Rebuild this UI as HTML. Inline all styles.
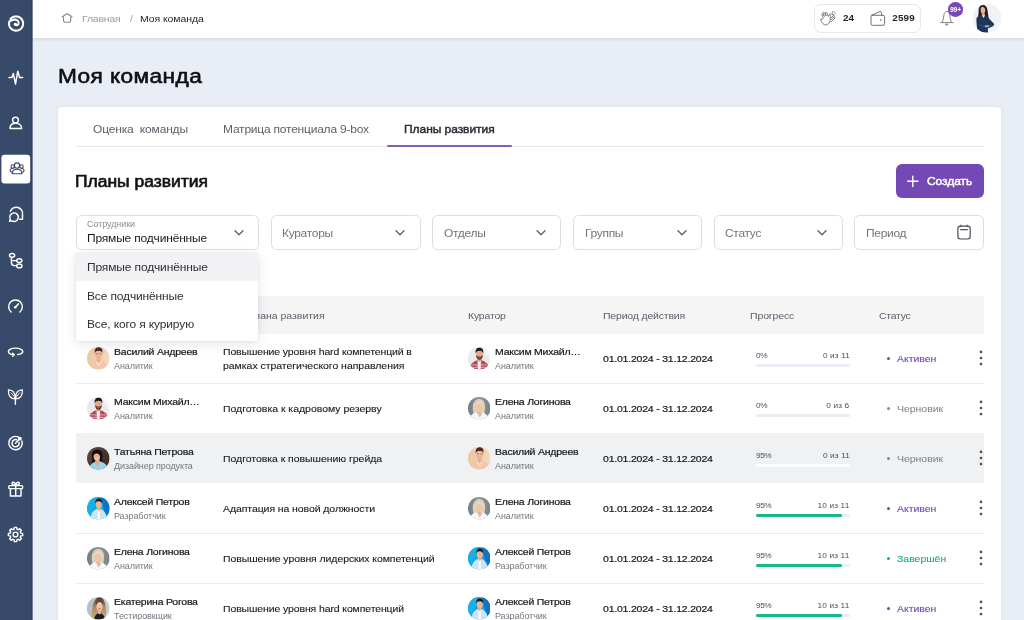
<!DOCTYPE html>
<html lang="ru"><head><meta charset="utf-8"><title>Моя команда</title>
<style>
*{box-sizing:border-box;margin:0;padding:0}
html,body{width:1024px;height:620px;overflow:hidden}
body{font-family:"Liberation Sans",sans-serif;background:#e9eef6;position:relative}
.abs{position:absolute}
.t{position:absolute;white-space:nowrap;line-height:1}
.b{font-weight:700}
.m1{-webkit-text-stroke:0.1px currentColor}
.m2{-webkit-text-stroke:0.2px currentColor}
.m3{-webkit-text-stroke:0.3px currentColor}
.m4{-webkit-text-stroke:0.45px currentColor}
.m5{-webkit-text-stroke:0.6px currentColor}
#root{position:absolute;left:0;top:0;width:1024px;height:620px;will-change:transform}
</style></head><body>
<svg width="0" height="0" style="position:absolute">
<defs>
<clipPath id="cc"><circle cx="12" cy="12" r="12"/></clipPath>
<linearGradient id="g1" x1="0" x2="1"><stop offset="0" stop-color="#e8c7a2"/><stop offset="1" stop-color="#f7d6bd"/></linearGradient>
<linearGradient id="g3" x1="0" y1="0" x2="1" y2="1"><stop offset="0" stop-color="#6a5340"/><stop offset=".5" stop-color="#47352c"/><stop offset="1" stop-color="#3d2d27"/></linearGradient>
<linearGradient id="g5" x1="0" x2="1"><stop offset="0" stop-color="#737b82"/><stop offset=".5" stop-color="#8f969b"/><stop offset="1" stop-color="#7b8389"/></linearGradient>
<linearGradient id="g6h" x1="0" y1="0" x2="0" y2="1"><stop offset="0" stop-color="#4e392c"/><stop offset=".45" stop-color="#a98a62"/><stop offset="1" stop-color="#cfae7e"/></linearGradient>
<!-- a1 -->
<g id="a1" clip-path="url(#cc)">
<rect width="24" height="24" fill="url(#g1)"/>
<path d="M1 24 C1.6 18.4 5.4 16.2 9.4 15 L15.2 15 C19.2 16.2 22.4 18.4 23 24 Z" fill="#f6c3ab"/>
<path d="M10 11.4 H14.6 V15.2 L12.3 17.6 L10 15.2 Z" fill="#e9ae90"/>
<path d="M10.2 15 L12.3 17.8 L14.4 15 L15.6 16 L12.3 21 L9 16 Z" fill="#fbd9c9"/>
<ellipse cx="12.3" cy="7.8" rx="3.9" ry="5.2" fill="#efbb9b"/>
<path d="M8.3 6.8 C7.6 2.4 9.6 0.2 12.5 0.2 C15.4 0.2 17 2.4 16.3 6.8 C15.8 4.8 14.8 4.2 12.3 4.2 C9.8 4.2 8.8 4.8 8.3 6.8 Z" fill="#4c2c22"/>
<path d="M9.2 7.4 H11.6 M13 7.4 H15.4" stroke="#8a6353" stroke-width="0.8" fill="none"/>
<path d="M11 10.6 Q12.3 11.4 13.6 10.6" stroke="#c98770" stroke-width="0.6" fill="none"/>
</g>
<!-- a2 -->
<g id="a2" clip-path="url(#cc)">
<rect width="24" height="24" fill="#e9e9ed"/>
<path d="M12 0 H24 V14 Z" fill="#f5f5f7"/>
<path d="M1 24 C1.6 18.6 5 15.8 9.4 14 L14.8 14 C19.2 15.8 22.4 18.6 23 24 Z" fill="#c8525f"/>
<path d="M4.6 17.4 L3.6 24 M7.6 15.4 L6.8 24 M16.8 15.4 L17.4 24 M19.8 17.4 L20.6 24" stroke="#8c2d3c" stroke-width="1"/>
<path d="M3 19 H21 M1.6 21.6 H22.4" stroke="#f2bcc2" stroke-width="0.9"/>
<path d="M10.2 13.6 H13.8 L13.4 24 H10.6 Z" fill="#f4eef0"/>
<path d="M10 11 H14.4 V14 L12.2 15.8 L10 14 Z" fill="#d79c80"/>
<ellipse cx="12.2" cy="7.6" rx="3.8" ry="5" fill="#e2aa8c"/>
<path d="M8.3 7 C7.4 2.6 9.4 0.7 12.3 0.7 C15.2 0.7 17 2.6 16.1 7 C15.7 5 14.8 4 12.2 4 C9.6 4 8.7 5 8.3 7 Z" fill="#231815"/>
<path d="M8.5 8.2 C8.7 11.8 10.2 13.6 12.2 13.6 C14.2 13.6 15.7 11.8 15.9 8.2 C15.2 9.8 14.2 10 12.2 10 C10.2 10 9.2 9.8 8.5 8.2 Z" fill="#5b3524"/>
<path d="M11 11.2 Q12.2 11.9 13.4 11.2" stroke="#f3e9e4" stroke-width="0.5" fill="none"/>
</g>
<!-- a3 -->
<g id="a3" clip-path="url(#cc)">
<rect width="24" height="24" fill="url(#g3)"/>
<path d="M5.6 12 C3.6 5.4 7.4 2.4 11 2.6 C15 2.8 17.6 6 16.2 11.4 C15.8 13 16.6 14.6 17.2 16 L5 17 C5.8 15.4 6 13.6 5.6 12 Z" fill="#15100f"/>
<path d="M1.6 24 C2.6 19.6 5.4 17 8.8 15.8 L14.6 15.4 C18.6 16.6 21.6 19.4 22.6 24 Z" fill="#9bd5ec"/>
<path d="M8.8 14 L13 13.6 L13.8 16 L11.2 21.4 L8.6 16.4 Z" fill="#e0ab8c"/>
<ellipse cx="10.4" cy="10.2" rx="3.4" ry="4.5" transform="rotate(-8 10.4 10.2)" fill="#e6b293"/>
<path d="M6.8 9.8 C6.2 5.6 8.4 4 10.8 4.2 C13.4 4.4 14.8 6.4 14.2 10 C13.4 7.6 12 6.6 10 6.8 C8.2 7 7.4 8 6.8 9.8 Z" fill="#15100f"/>
<path d="M9 12.4 Q10.4 13.5 11.8 12.2" stroke="#fff" stroke-width="0.7" fill="none"/>
</g>
<!-- a4 -->
<g id="a4" clip-path="url(#cc)">
<rect width="24" height="24" fill="#13a7e1"/>
<path d="M15 0 L24 0 V24 H20 Z" fill="#0b74c8"/>
<path d="M0 0 H10 L4 24 H0 Z" fill="#1cb4e8" opacity=".7"/>
<path d="M3.6 24 C4 17.4 6.6 14.6 10 12.8 L14.8 12.8 C18.2 14.6 20.8 17.4 21.2 24 Z" fill="#cde4f2"/>
<path d="M11.4 12.6 H13.6 L13.8 24 H11.2 Z" fill="#f6fbfe"/>
<path d="M10.6 10.6 H14.4 V13 L12.5 14.8 L10.6 13 Z" fill="#ddaa8d"/>
<ellipse cx="12.5" cy="7.6" rx="3.3" ry="4.5" fill="#e8b697"/>
<path d="M9.1 7.2 C8.4 3.4 10 1.7 12.6 1.7 C15.2 1.7 16.7 3.4 15.9 7.2 C15.5 5.4 14.8 4.6 12.5 4.6 C10.2 4.6 9.5 5.4 9.1 7.2 Z" fill="#1b1718"/>
</g>
<!-- a5 -->
<g id="a5" clip-path="url(#cc)">
<rect width="24" height="24" fill="url(#g5)"/>
<path d="M5.6 15.6 C3.6 7 7.6 2.2 11.8 2.2 C16.4 2.2 19.6 7 17.6 15.6 C17.4 16.8 17.8 17.6 18.2 18.4 H5 C5.4 17.6 5.8 16.8 5.6 15.6 Z" fill="#ded3ba"/>
<path d="M7 6 C8.6 3.4 10.4 2.6 11.8 2.4 C10 4.4 8.6 7 8 10 Z" fill="#cfcbc2"/>
<path d="M0.8 24 C1.6 19.8 5 17.6 8.6 16.4 L15 16.4 C18.6 17.6 22.2 19.8 23 24 Z" fill="#f4f6f8"/>
<path d="M9.8 15 H13.6 V17 L12.4 21.6 L9.8 17 Z" fill="#e3b49a"/>
<path d="M12.2 21.8 L13.8 16.8 L15 17.4 Z" fill="#d8a08c"/>
<ellipse cx="11.6" cy="11.2" rx="3.6" ry="4.7" fill="#efc5aa"/>
<path d="M7.9 10.8 C7.4 6.6 9.4 4.8 11.8 4.8 C14.4 4.8 16 6.6 15.3 10.8 C14.6 8.2 13.6 7.4 12.4 7 C10.4 7.2 8.6 8.4 7.9 10.8 Z" fill="#e6dcc2"/>
</g>
<!-- a6 -->
<g id="a6" clip-path="url(#cc)">
<rect width="24" height="24" fill="#c5ccd4"/>
<path d="M0 0 H7 L5 24 H0 Z" fill="#b7c0ca"/>
<path d="M5.4 24 C4.6 14 6.2 0.6 13.2 0.3 C20.2 0.6 21 14 19.6 24 Z" fill="url(#g6h)"/>
<path d="M7.6 24 C7.8 20.6 9.4 18.4 11 17.4 L15.6 17.4 C17.2 18.4 18.8 20.6 19 24 Z" fill="#1c1d21"/>
<path d="M11.6 13.6 H15 V17.2 L13.3 18.6 L11.6 17.2 Z" fill="#e3b196"/>
<ellipse cx="13.3" cy="9.6" rx="3.5" ry="5" fill="#eec2a6"/>
<path d="M9.7 9.4 C9 4.6 11 2.8 13.4 2.8 C15.8 2.8 17.7 4.6 16.9 9.4 C16.4 6.6 15.6 5.6 13.6 5.2 C11.4 5.4 10.3 6.8 9.7 9.4 Z" fill="#5b4333"/>
<path d="M12 12.3 Q13.3 13.3 14.6 12.3" stroke="#c84a52" stroke-width="0.9" fill="none"/>
</g>
</defs>
</svg>

<div id="root">
<div class="abs" style="left:32px;top:0;width:992px;height:38px;background:#fff;box-shadow:0 1.5px 2.5px rgba(70,66,70,.10)"></div>
<svg class="abs" style="left:0;top:0" width="34" height="620" viewBox="0 0 34 620">
<rect x="0" y="0" width="32.4" height="620" fill="#384a69"/><rect x="31" y="0" width="1.4" height="620" fill="#31415f"/>
<g fill="none" stroke="#fff" stroke-width="1.45" stroke-linecap="round" stroke-linejoin="round">
<path d="M10.48 18.97 L10.83 18.60 L11.20 18.25 L11.59 17.92 L12.00 17.63 L12.43 17.36 L12.88 17.13 L13.35 16.93 L13.83 16.76 L14.32 16.63 L14.82 16.53 L15.32 16.46 L15.82 16.44 L16.33 16.44 L16.84 16.49 L17.34 16.57 L17.83 16.68 L18.31 16.83 L18.78 17.01 L19.24 17.23 L19.68 17.48 L20.10 17.75 L20.50 18.06 L20.88 18.39 L21.23 18.75 L21.56 19.14 L21.86 19.54 L22.13 19.97 L22.37 20.41 L22.57 20.87 L22.75 21.34 L22.89 21.83 L22.99 22.32 L23.06 22.81 L23.10 23.31 L23.10 23.82 L23.06 24.32 L22.99 24.81 L22.89 25.30 L22.75 25.79 L22.57 26.26 L22.36 26.71 L22.13 27.15 L21.86 27.57 L21.56 27.98 L21.24 28.36 L20.88 28.71 L20.51 29.04 L20.11 29.34 L19.70 29.62 L19.26 29.86 L18.81 30.07 L18.34 30.25 L17.87 30.40 L17.38 30.51 L16.89 30.59 L16.39 30.63 L15.90 30.64 L15.40 30.61 L14.91 30.55 L14.42 30.45 L13.94 30.32 L13.47 30.15 L13.02 29.96 L12.58 29.73 L12.15 29.47 L11.75 29.18 L11.37 28.86 L11.01 28.52 L10.68 28.15 L10.37 27.77 L10.09 27.36 L9.84 26.93 L9.63 26.48 L9.44 26.03 L9.29 25.56 L9.17 25.08 L9.09 24.59 L9.04 24.10 L9.02 23.61 L9.04 23.11 L9.10 22.62 L9.19 22.14 L9.31 21.66 L9.46 21.20 L10.34 21.05 L10.89 20.85 L11.32 20.64 L11.71 20.44 L12.08 20.26 L12.44 20.10 L12.79 19.97 L13.14 19.85 L13.47 19.76 L13.81 19.69 L14.13 19.64 L14.45 19.61 L14.77 19.60 L15.07 19.61 L15.37 19.64 L15.66 19.69 L15.94 19.76 L16.20 19.84 L16.46 19.94 L16.70 20.05 L16.93 20.18 L17.15 20.32 L17.35 20.47 L17.54 20.63 L17.71 20.80 L17.87 20.98 L18.01 21.17 L18.14 21.36 L18.25 21.55 L18.34 21.75 L18.42 21.95 L18.48 22.16 L18.53 22.36 L18.56 22.56 L18.58 22.76 L18.58 22.96 L18.57 23.15 L18.55 23.34 L18.51 23.52 L18.46 23.69 L18.40 23.86 L18.33 24.02 L18.25 24.18 L18.16 24.32 L18.06 24.45 L17.96 24.58 L17.85 24.69 L17.73 24.79 L17.61 24.89 L17.48 24.97 L17.35 25.04 L17.22 25.10 L17.09 25.15 L16.96 25.19 L16.83 25.22 L16.69 25.23 L16.56 25.24 L16.44 25.24 L16.31 25.23 L16.19 25.21 L16.08 25.18 L15.96 25.15 L15.86 25.10 L15.76 25.05 L15.67 25.00 L15.58 24.94 L15.50 24.87 L15.42 24.80 L15.36 24.73 L15.30 24.65 L15.25 24.57 L15.20 24.49 L15.17 24.41 L15.14 24.33 L15.12 24.24 L15.10 24.16" stroke-width="2.05"/>
<circle cx="15.4" cy="24.3" r="1.6" fill="#fff" stroke="none"/>
<!-- pulse -->
<path d="M9 77.4 H12 L13.3 73.4 L15.5 84 L17.8 71.2 L19.5 77.4 H22.6"/>
<!-- user -->
<circle cx="15.5" cy="120.1" r="2.9"/>
<path d="M10 128.4 C10 125.2 12.4 123.2 15.7 123.2 C19 123.2 21.6 125.2 21.6 128.4 Z"/>
<!-- chat rotate -->
<path d="M9.6 221.3 L10.3 219.3 A4.3 4.3 0 1 1 11.9 220.9 Z"/>
<path d="M10.4 211.3 A6.3 6.3 0 0 1 22.5 214.6 V219.3 H19.6"/>
<!-- hierarchy -->
<ellipse cx="12.1" cy="255.3" rx="2.6" ry="1.9"/>
<ellipse cx="19.3" cy="260.6" rx="2.6" ry="1.9"/>
<ellipse cx="19.3" cy="265.9" rx="2.6" ry="1.9"/>
<path d="M11.4 257.6 V262.6 Q11.4 265.6 14.4 265.6 H16.5 M11.4 260.6 H16.5"/>
<!-- gauge -->
<path d="M11.2 312 A6.8 6.8 0 1 1 19.8 312"/>
<path d="M15.4 307 L18.4 303.9" stroke-width="1.5"/>
<circle cx="15.3" cy="307.2" r="1.3" fill="#fff" stroke="none"/>
<!-- 360 -->
<path d="M17.6 354.6 C21 354.2 22.7 352.8 22.7 351.5 C22.7 349.6 19.5 348.1 15.5 348.1 C11.5 348.1 8.4 349.6 8.4 351.5 C8.4 353.2 10.6 354.5 14 354.8 M12.6 353.3 L14.3 354.8 L12.6 356.3"/>
<!-- sprout -->
<path d="M15.2 399 C10 398.6 8.2 395 8.4 389.9 C13.4 389.8 15.4 393 15.2 399 Z M15.6 399 C20.8 398.6 22.6 395 22.4 389.9 C17.4 389.8 15.4 393 15.6 399 Z" stroke-width="1.2"/>
<path d="M15.4 397 V404.3" stroke-width="1.4"/>
<path d="M11.2 392.9 L15 397.6 M19.6 392.9 L15.8 397.6" stroke-width="0.9"/>
<!-- target -->
<path d="M18.3 437 A6.7 6.7 0 1 0 21.9 441"/>
<path d="M16.7 439.7 A3.6 3.6 0 1 0 19.1 442.2"/>
<path d="M15.5 443.2 L19.6 438.9" stroke-width="1.4"/>
<circle cx="19.9" cy="438.6" r="1.2"/>
<!-- gift -->
<rect x="8.8" y="485.6" width="13.8" height="3" rx="0.8"/>
<path d="M10.4 488.6 V496 H21 V488.6 M15.7 485.6 V496 M15.7 485.4 C13.5 485.4 12 484.4 12 483.3 C12 482 13.8 481.8 14.7 483 C15.3 483.8 15.7 484.6 15.7 485.4 C15.7 484.6 16.1 483.8 16.7 483 C17.6 481.8 19.4 482 19.4 483.3 C19.4 484.4 17.9 485.4 15.7 485.4"/>
<!-- gear -->
<circle cx="15.5" cy="534.5" r="2.4"/>
<path d="M14.37 527.39 L16.63 527.39 L16.87 529.17 L18.30 529.77 L19.73 528.68 L21.32 530.27 L20.23 531.70 L20.83 533.13 L22.61 533.37 L22.61 535.63 L20.83 535.87 L20.23 537.30 L21.32 538.73 L19.73 540.32 L18.30 539.23 L16.87 539.83 L16.63 541.61 L14.37 541.61 L14.13 539.83 L12.70 539.23 L11.27 540.32 L9.68 538.73 L10.77 537.30 L10.17 535.87 L8.39 535.63 L8.39 533.37 L10.17 533.13 L10.77 531.70 L9.68 530.27 L11.27 528.68 L12.70 529.77 L14.13 529.17 Z"/>
</g>
<!-- active -->
<rect x="1.4" y="154.8" width="28.8" height="28.6" rx="3.2" fill="#fff"/>
<g fill="none" stroke="#3b4768" stroke-width="1.1" stroke-linecap="round" stroke-linejoin="round">
<circle cx="17" cy="165.6" r="2.7"/>
<path d="M12.2 173.7 C12.2 170.8 14.2 169.2 17 169.2 C19.8 169.2 22 170.8 22 173.7 Z"/>
<circle cx="12.7" cy="166.5" r="1.7"/>
<circle cx="21.5" cy="166.5" r="1.7"/>
<path d="M11.6 172.3 C10.4 171.8 10 170.9 10.2 170 C10.6 168.8 11.8 168.3 13 168.6"/>
<path d="M22.6 172.3 C23.8 171.8 24.2 170.9 24 170 C23.6 168.8 22.4 168.3 21.2 168.6"/>
</g>
</svg>
<svg class="abs" style="left:60px;top:11px" width="14" height="14" viewBox="60 11 14 14" fill="none" stroke="#85898f" stroke-width="1.15" stroke-linecap="round" stroke-linejoin="round">
<path d="M62.2 16.8 L67.1 13.7 L72 16.8"/><path d="M63.5 17 V20.6 Q63.5 22.2 65.1 22.2 H69.1 Q70.7 22.2 70.7 20.6 V17"/></svg>
<div class="t " style="top:14.28px;font-size:9.713px;color:#9a9ea5;left:81.50px;transform-origin:0 50%;transform:scaleX(1.0811);letter-spacing:-0.185px;">Главная</div>
<div class="t " style="top:14.28px;font-size:9.713px;color:#9a9ea5;left:129.50px;transform-origin:0 50%;transform:scaleX(1.0811);">/</div>
<div class="t " style="top:14.28px;font-size:9.713px;color:#22262c;left:139.50px;transform-origin:0 50%;transform:scaleX(1.0811);letter-spacing:-0.074px;">Моя команда</div>
<div class="abs" style="left:814px;top:4px;width:107px;height:29px;border:1px solid #e6e8ec;border-radius:7px;background:#fff"></div>
<svg class="abs" style="left:819px;top:9px" width="19" height="19" viewBox="819 9 19 19" fill="none" stroke="#6d7178" stroke-width="0.9" stroke-linecap="round" stroke-linejoin="round">
<path d="M823.2 17.5 L821.8 15 C821.3 14 822.6 13.3 823.2 14.3 L824.4 16.4 L823 13.4 C822.6 12.4 823.9 11.8 824.5 12.8 L826.2 15.9 L825.4 13.2 C825.1 12.2 826.4 11.8 826.8 12.7 L828.4 16.4 C828.6 15.4 829 14.6 829.7 14.8 C830.4 15 830.2 16 830.2 16.8 C830.2 19 830.6 20.4 829.6 22.2 C828.4 24.4 826 25.6 824.2 24.6 C822.6 23.7 821.4 21.4 820.8 19.8 C820.4 18.8 821.6 18.3 822.1 19.2 Z"/>
<path d="M829.6 15 L831.4 13.4 C832.2 12.8 833 13.7 832.4 14.4 M832.4 14.4 C833.2 13.8 834 14.8 833.3 15.5 L831 18 M833.3 15.5 C834 15 834.8 15.9 834.2 16.6 L831 19.8 M834.2 17 C834.8 16.7 835.4 17.5 834.9 18.1 L831 22"/>
<path d="M832.6 11.4 V12.2 M834.4 11.8 L834 12.6 M835.4 13.6 L834.8 13.9" stroke-width="0.8"/>
</svg>
<div class="t b" style="top:13.32px;font-size:9.900px;color:#24272d;left:843.00px;transform-origin:0 50%;transform:scaleX(1.0000);letter-spacing:-0.050px;">24</div>
<svg class="abs" style="left:868px;top:9px" width="19" height="19" viewBox="868 9 19 19" fill="none" stroke="#6d7178" stroke-width="1" stroke-linecap="round" stroke-linejoin="round">
<rect x="871" y="15.3" width="13.6" height="10" rx="1.4"/><path d="M871.6 15.2 L880.2 11.5 C880.9 11.3 881.3 11.6 881.4 12.2 L881.8 15.2"/><rect x="880" y="19.4" width="1.4" height="1.4" fill="#6d7178" stroke="none"/></svg>
<div class="t b" style="top:13.32px;font-size:9.900px;color:#24272d;left:892.20px;transform-origin:0 50%;transform:scaleX(1.0000);letter-spacing:0.200px;">2599</div>
<svg class="abs" style="left:938px;top:8px" width="18" height="20" viewBox="938 8 18 20" fill="none" stroke="#7d8187" stroke-width="1" stroke-linecap="round" stroke-linejoin="round">
<path d="M940.5 22.6 H953.2 M942.2 22.4 C943.3 20.2 943.5 18 943.8 15.6 C944.1 12.6 945.3 11.3 946.85 11.3 C948.4 11.3 949.6 12.6 949.9 15.6 C950.2 18 950.4 20.2 951.5 22.4"/><path d="M945.8 24.4 L946.8 25.4 L947.8 24.4 Z" fill="#7d8187"/></svg>
<div class="abs" style="left:948.1px;top:2.2px;width:14.6px;height:14.6px;border-radius:50%;background:#7a46b6"></div>
<div class="t b" style="top:6.68px;font-size:6.290px;color:#fff;left:949.90px;transform-origin:0 50%;transform:scaleX(1.0811);letter-spacing:-0.185px;">99+</div>
<svg class="abs" style="left:972px;top:3px" width="30" height="30" viewBox="0 0 30 30">
<defs><clipPath id="cu"><circle cx="15" cy="15.2" r="14.4"/></clipPath></defs>
<circle cx="15" cy="15.2" r="14.4" fill="#f1f2f7"/>
<g clip-path="url(#cu)">
<path d="M10.8 2 C7.6 2.2 6.4 5 6.6 8.4 C6.7 11.4 5.8 13.6 5.6 15.6 L10 14.6 L16.4 17.6 C16.8 14 16 11 15.4 6.8 C15 3.8 13.2 1.9 10.8 2 Z" fill="#2f1d1b"/>
<path d="M8.6 6 C8.6 4.4 9.8 3.8 11 4 C12.6 4.2 13.4 5.8 13.2 7.8 C13 9.6 12.2 11.2 10.8 11.2 C9.4 11.2 8.6 8.6 8.6 6 Z" fill="#e3b49d"/>
<path d="M9.8 10.6 L12.6 10.2 L13 13.4 L9.8 13.4 Z" fill="#d7a48c"/>
<path d="M6.2 13.4 C7.6 12.6 9 12.4 10 12.8 L11.6 14.8 L13 12.6 C15 13 16.6 14.2 17.4 16 L21.8 20.6 C22.6 21.6 22 22.8 20.6 23.4 L15.8 25.6 L16 30 L5.4 29 C5 24 4.2 19 4.4 16 C4.5 14.8 5.2 14 6.2 13.4 Z" fill="#1c3759"/>
<path d="M10.4 13 L11.6 15 L12.8 12.8 L12.4 12.2 L10.8 12.4 Z" fill="#f4f4f6"/>
<path d="M7.4 20.4 L13.6 23.2 L19.8 20.8 L21 22.6 L14.6 25.4 L6.8 22.8 Z" fill="#254469"/>
<path d="M12.6 22.4 L16.8 22.2 L17.4 23.6 L13.4 24.2 Z" fill="#e0b09a"/>
</g></svg>
<div class="t m5" style="top:64.83px;font-size:20.997px;color:#0d0f12;left:58.30px;transform-origin:0 50%;transform:scaleX(1.0811);letter-spacing:0.370px;">Моя команда</div>
<div class="abs" style="left:58px;top:107px;width:943px;height:530px;background:#fff;border-radius:4.5px;box-shadow:0 0 4px rgba(90,100,150,.10)"></div>
<div class="t " style="top:124.20px;font-size:11.100px;color:#5d6168;left:93.20px;transform-origin:0 50%;transform:scaleX(1.0811);letter-spacing:-0.157px;">Оценка&nbsp; команды</div>
<div class="t " style="top:124.20px;font-size:11.100px;color:#5d6168;left:223.20px;transform-origin:0 50%;transform:scaleX(1.0811);letter-spacing:-0.199px;">Матрица потенциала 9-box</div>
<div class="t m4" style="top:124.20px;font-size:11.100px;color:#2a2e35;left:404.20px;transform-origin:0 50%;transform:scaleX(1.0811);letter-spacing:-0.046px;">Планы развития</div>
<div class="abs" style="left:76px;top:146px;width:908px;height:1px;background:#e5e7eb;"></div>
<div class="abs" style="left:387px;top:144.5px;width:125px;height:2.5px;background:#8260ba;border-radius:1px"></div>
<div class="t m5" style="top:173.82px;font-size:15.575px;color:#101215;left:75.40px;transform-origin:0 50%;transform:scaleX(1.1236);letter-spacing:-0.018px;">Планы развития</div>
<div class="abs" style="left:896px;top:164px;width:88px;height:34px;border-radius:6px;background:#7549b5"></div>
<svg class="abs" style="left:905px;top:174px" width="15" height="15" viewBox="905 174 15 15" stroke="#fff" stroke-width="1.4" stroke-linecap="round"><path d="M907.6 181.3 H918 M912.8 176.1 V186.5"/></svg>
<div class="t m4" style="top:175.90px;font-size:11.100px;color:#fff;left:927.30px;transform-origin:0 50%;transform:scaleX(1.0811);letter-spacing:-0.046px;">Создать</div>
<div class="abs" style="left:76px;top:215px;width:183px;height:34.5px;border:1px solid #dcdee2;border-radius:5.5px;background:#fff"></div>
<svg class="abs" style="left:231.60px;top:226px" width="14" height="14" viewBox="0 0 14 14" fill="none" stroke="#5a5e66" stroke-width="1.3" stroke-linecap="round" stroke-linejoin="round"><path d="M3 4.8 L7 8.7 L11 4.8"/></svg>
<div class="abs" style="left:271px;top:215px;width:149.5px;height:34.5px;border:1px solid #dcdee2;border-radius:5.5px;background:#fff"></div>
<div class="t " style="top:228.00px;font-size:11.100px;color:#70757c;left:282.30px;transform-origin:0 50%;transform:scaleX(1.0811);letter-spacing:-0.278px;">Кураторы</div>
<svg class="abs" style="left:393.10px;top:226px" width="14" height="14" viewBox="0 0 14 14" fill="none" stroke="#5a5e66" stroke-width="1.3" stroke-linecap="round" stroke-linejoin="round"><path d="M3 4.8 L7 8.7 L11 4.8"/></svg>
<div class="abs" style="left:432.3px;top:215px;width:129.2px;height:34.5px;border:1px solid #dcdee2;border-radius:5.5px;background:#fff"></div>
<div class="t " style="top:228.00px;font-size:11.100px;color:#70757c;left:443.60px;transform-origin:0 50%;transform:scaleX(1.0811);letter-spacing:-0.278px;">Отделы</div>
<svg class="abs" style="left:534.10px;top:226px" width="14" height="14" viewBox="0 0 14 14" fill="none" stroke="#5a5e66" stroke-width="1.3" stroke-linecap="round" stroke-linejoin="round"><path d="M3 4.8 L7 8.7 L11 4.8"/></svg>
<div class="abs" style="left:573.3px;top:215px;width:128.7px;height:34.5px;border:1px solid #dcdee2;border-radius:5.5px;background:#fff"></div>
<div class="t " style="top:228.00px;font-size:11.100px;color:#70757c;left:584.60px;transform-origin:0 50%;transform:scaleX(1.0811);letter-spacing:-0.278px;">Группы</div>
<svg class="abs" style="left:674.60px;top:226px" width="14" height="14" viewBox="0 0 14 14" fill="none" stroke="#5a5e66" stroke-width="1.3" stroke-linecap="round" stroke-linejoin="round"><path d="M3 4.8 L7 8.7 L11 4.8"/></svg>
<div class="abs" style="left:714px;top:215px;width:128.5px;height:34.5px;border:1px solid #dcdee2;border-radius:5.5px;background:#fff"></div>
<div class="t " style="top:228.00px;font-size:11.100px;color:#70757c;left:725.30px;transform-origin:0 50%;transform:scaleX(1.0811);letter-spacing:-0.278px;">Статус</div>
<svg class="abs" style="left:815.10px;top:226px" width="14" height="14" viewBox="0 0 14 14" fill="none" stroke="#5a5e66" stroke-width="1.3" stroke-linecap="round" stroke-linejoin="round"><path d="M3 4.8 L7 8.7 L11 4.8"/></svg>
<div class="abs" style="left:854.3px;top:215px;width:130px;height:34.5px;border:1px solid #dcdee2;border-radius:5.5px;background:#fff"></div>
<div class="t " style="top:228.00px;font-size:11.100px;color:#70757c;left:865.60px;transform-origin:0 50%;transform:scaleX(1.0811);letter-spacing:-0.278px;">Период</div>
<div class="t " style="top:219.75px;font-size:8.325px;color:#8d8f94;left:87.10px;transform-origin:0 50%;transform:scaleX(1.0811);letter-spacing:-0.065px;">Сотрудники</div>
<div class="t " style="top:232.80px;font-size:11.100px;color:#17191d;left:87.30px;transform-origin:0 50%;transform:scaleX(1.0811);letter-spacing:-0.167px;">Прямые подчинённые</div>
<svg class="abs" style="left:955px;top:223px" width="18" height="18" viewBox="955 223 18 18" fill="none" stroke="#4b5058" stroke-width="1.2" stroke-linecap="round" stroke-linejoin="round"><rect x="957.9" y="226.2" width="12.3" height="12.8" rx="2.4"/><path d="M960.6 229.6 H967.5 M961 225.2 V226.6 M967.1 225.2 V226.6"/></svg>
<div class="abs" style="left:76px;top:296.3px;width:908.3px;height:37.4px;background:#f5f5f6;"></div>
<div class="t " style="top:310.68px;font-size:9.713px;color:#5a5f67;left:87.30px;transform-origin:0 50%;transform:scaleX(1.0811);letter-spacing:-0.176px;">Сотрудник</div>
<div class="t " style="top:310.68px;font-size:9.713px;color:#5a5f67;right:699.60px;transform-origin:100% 50%;transform:scaleX(1.0811);letter-spacing:0.000px;">Название плана развития</div>
<div class="t " style="top:310.68px;font-size:9.713px;color:#5a5f67;left:467.50px;transform-origin:0 50%;transform:scaleX(1.0811);letter-spacing:-0.176px;">Куратор</div>
<div class="t " style="top:310.68px;font-size:9.713px;color:#5a5f67;left:603.00px;transform-origin:0 50%;transform:scaleX(1.0811);letter-spacing:-0.167px;">Период действия</div>
<div class="t " style="top:310.68px;font-size:9.713px;color:#5a5f67;left:750.00px;transform-origin:0 50%;transform:scaleX(1.0811);letter-spacing:-0.111px;">Прогресс</div>
<div class="t " style="top:310.68px;font-size:9.713px;color:#5a5f67;left:878.50px;transform-origin:0 50%;transform:scaleX(1.0811);letter-spacing:-0.259px;">Статус</div>
<div class="abs" style="left:76px;top:382.5px;width:908.3px;height:1px;background:#eaebee;"></div>
<svg class="abs" style="left:87.2px;top:347.00px" width="22.6" height="22.6" viewBox="0 0 24 24"><use href="#a1"/></svg>
<div class="t m2" style="top:347.28px;font-size:9.713px;color:#15171b;left:114.30px;transform-origin:0 50%;transform:scaleX(1.0811);letter-spacing:-0.204px;">Василий Андреев</div>
<div class="t " style="top:362.15px;font-size:8.325px;color:#73777e;left:114.30px;transform-origin:0 50%;transform:scaleX(1.0811);letter-spacing:-0.074px;">Аналитик</div>
<div class="t m1" style="top:347.38px;font-size:9.713px;color:#15171b;left:222.50px;transform-origin:0 50%;transform:scaleX(1.0811);letter-spacing:-0.120px;">Повышение уровня hard компетенций в</div>
<div class="t m1" style="top:361.18px;font-size:9.713px;color:#15171b;left:222.50px;transform-origin:0 50%;transform:scaleX(1.0811);letter-spacing:-0.028px;">рамках стратегического направления</div>
<svg class="abs" style="left:467.5px;top:347.00px" width="22.6" height="22.6" viewBox="0 0 24 24"><use href="#a2"/></svg>
<div class="t m2" style="top:347.28px;font-size:9.713px;color:#15171b;left:494.80px;transform-origin:0 50%;transform:scaleX(1.0811);letter-spacing:-0.204px;">Максим Михайл…</div>
<div class="t " style="top:362.15px;font-size:8.325px;color:#73777e;left:494.80px;transform-origin:0 50%;transform:scaleX(1.0811);letter-spacing:-0.074px;">Аналитик</div>
<div class="t m2" style="top:353.98px;font-size:9.713px;color:#15171b;left:603.00px;transform-origin:0 50%;transform:scaleX(1.0811);letter-spacing:-0.185px;">01.01.2024 - 31.12.2024</div>
<div class="t " style="top:352.20px;font-size:7.678px;color:#4a4f57;left:756.00px;transform-origin:0 50%;transform:scaleX(1.0811);letter-spacing:-0.416px;">0%</div>
<div class="t " style="top:352.20px;font-size:7.678px;color:#4a4f57;right:174.40px;transform-origin:100% 50%;transform:scaleX(1.0811);letter-spacing:0.111px;">0 из 11</div>
<div class="abs" style="left:756px;top:363.90000000000003px;width:93.8px;height:3px;background:#eaeef4;border-radius:1.5px"></div>
<div class="abs" style="left:886.8px;top:356.6px;width:3.4px;height:3.4px;background:#6c47b4;border-radius:50%"></div>
<div class="t m1" style="top:353.98px;font-size:9.713px;color:#6c47b4;left:897.30px;transform-origin:0 50%;transform:scaleX(1.0811);letter-spacing:-0.019px;">Активен</div>
<svg class="abs" style="left:977px;top:349.30px" width="8" height="18" viewBox="0 0 8 18" fill="#4d525a"><circle cx="4" cy="2.9" r="1.35"/><circle cx="4" cy="9" r="1.35"/><circle cx="4" cy="15.1" r="1.35"/></svg>
<div class="abs" style="left:76px;top:432.5px;width:908.3px;height:1px;background:#eaebee;"></div>
<svg class="abs" style="left:87.2px;top:397.00px" width="22.6" height="22.6" viewBox="0 0 24 24"><use href="#a2"/></svg>
<div class="t m2" style="top:397.28px;font-size:9.713px;color:#15171b;left:114.30px;transform-origin:0 50%;transform:scaleX(1.0811);letter-spacing:-0.204px;">Максим Михайл…</div>
<div class="t " style="top:412.15px;font-size:8.325px;color:#73777e;left:114.30px;transform-origin:0 50%;transform:scaleX(1.0811);letter-spacing:-0.074px;">Аналитик</div>
<div class="t m1" style="top:403.98px;font-size:9.713px;color:#15171b;left:222.50px;transform-origin:0 50%;transform:scaleX(1.0811);letter-spacing:-0.019px;">Подготовка к кадровому резерву</div>
<svg class="abs" style="left:467.5px;top:397.00px" width="22.6" height="22.6" viewBox="0 0 24 24"><use href="#a5"/></svg>
<div class="t m2" style="top:397.28px;font-size:9.713px;color:#15171b;left:494.80px;transform-origin:0 50%;transform:scaleX(1.0811);letter-spacing:-0.204px;">Елена Логинова</div>
<div class="t " style="top:412.15px;font-size:8.325px;color:#73777e;left:494.80px;transform-origin:0 50%;transform:scaleX(1.0811);letter-spacing:-0.074px;">Аналитик</div>
<div class="t m2" style="top:403.98px;font-size:9.713px;color:#15171b;left:603.00px;transform-origin:0 50%;transform:scaleX(1.0811);letter-spacing:-0.185px;">01.01.2024 - 31.12.2024</div>
<div class="t " style="top:402.20px;font-size:7.678px;color:#4a4f57;left:756.00px;transform-origin:0 50%;transform:scaleX(1.0811);letter-spacing:-0.416px;">0%</div>
<div class="t " style="top:402.20px;font-size:7.678px;color:#4a4f57;right:174.40px;transform-origin:100% 50%;transform:scaleX(1.0811);letter-spacing:0.111px;">0 из 6</div>
<div class="abs" style="left:756px;top:413.90000000000003px;width:93.8px;height:3px;background:#eaeef4;border-radius:1.5px"></div>
<div class="abs" style="left:886.8px;top:406.6px;width:3.4px;height:3.4px;background:#858a91;border-radius:50%"></div>
<div class="t m1" style="top:403.98px;font-size:9.713px;color:#858a91;left:897.30px;transform-origin:0 50%;transform:scaleX(1.0811);letter-spacing:-0.019px;">Черновик</div>
<svg class="abs" style="left:977px;top:399.30px" width="8" height="18" viewBox="0 0 8 18" fill="#4d525a"><circle cx="4" cy="2.9" r="1.35"/><circle cx="4" cy="9" r="1.35"/><circle cx="4" cy="15.1" r="1.35"/></svg>
<div class="abs" style="left:76px;top:432.8px;width:908.3px;height:50px;background:#f0f1f2;"></div>
<svg class="abs" style="left:87.2px;top:447.00px" width="22.6" height="22.6" viewBox="0 0 24 24"><use href="#a3"/></svg>
<div class="t m2" style="top:447.28px;font-size:9.713px;color:#15171b;left:114.30px;transform-origin:0 50%;transform:scaleX(1.0811);letter-spacing:-0.204px;">Татьяна Петрова</div>
<div class="t " style="top:462.15px;font-size:8.325px;color:#73777e;left:114.30px;transform-origin:0 50%;transform:scaleX(1.0811);letter-spacing:-0.074px;">Дизайнер продукта</div>
<div class="t m1" style="top:453.98px;font-size:9.713px;color:#15171b;left:222.50px;transform-origin:0 50%;transform:scaleX(1.0811);letter-spacing:-0.037px;">Подготовка к повышению грейда</div>
<svg class="abs" style="left:467.5px;top:447.00px" width="22.6" height="22.6" viewBox="0 0 24 24"><use href="#a1"/></svg>
<div class="t m2" style="top:447.28px;font-size:9.713px;color:#15171b;left:494.80px;transform-origin:0 50%;transform:scaleX(1.0811);letter-spacing:-0.204px;">Василий Андреев</div>
<div class="t " style="top:462.15px;font-size:8.325px;color:#73777e;left:494.80px;transform-origin:0 50%;transform:scaleX(1.0811);letter-spacing:-0.074px;">Аналитик</div>
<div class="t m2" style="top:453.98px;font-size:9.713px;color:#15171b;left:603.00px;transform-origin:0 50%;transform:scaleX(1.0811);letter-spacing:-0.185px;">01.01.2024 - 31.12.2024</div>
<div class="t " style="top:452.20px;font-size:7.678px;color:#4a4f57;left:756.00px;transform-origin:0 50%;transform:scaleX(1.0811);letter-spacing:-0.416px;">95%</div>
<div class="t " style="top:452.20px;font-size:7.678px;color:#4a4f57;right:174.40px;transform-origin:100% 50%;transform:scaleX(1.0811);letter-spacing:0.111px;">0 из 11</div>
<div class="abs" style="left:756px;top:463.90000000000003px;width:93.8px;height:3px;background:#fbfcfd;border-radius:1.5px"></div>
<div class="abs" style="left:886.8px;top:456.6px;width:3.4px;height:3.4px;background:#858a91;border-radius:50%"></div>
<div class="t m1" style="top:453.98px;font-size:9.713px;color:#858a91;left:897.30px;transform-origin:0 50%;transform:scaleX(1.0811);letter-spacing:-0.019px;">Черновик</div>
<svg class="abs" style="left:977px;top:449.30px" width="8" height="18" viewBox="0 0 8 18" fill="#4d525a"><circle cx="4" cy="2.9" r="1.35"/><circle cx="4" cy="9" r="1.35"/><circle cx="4" cy="15.1" r="1.35"/></svg>
<div class="abs" style="left:76px;top:532.5px;width:908.3px;height:1px;background:#eaebee;"></div>
<svg class="abs" style="left:87.2px;top:497.00px" width="22.6" height="22.6" viewBox="0 0 24 24"><use href="#a4"/></svg>
<div class="t m2" style="top:497.28px;font-size:9.713px;color:#15171b;left:114.30px;transform-origin:0 50%;transform:scaleX(1.0811);letter-spacing:-0.204px;">Алексей Петров</div>
<div class="t " style="top:512.15px;font-size:8.325px;color:#73777e;left:114.30px;transform-origin:0 50%;transform:scaleX(1.0811);letter-spacing:-0.074px;">Разработчик</div>
<div class="t m1" style="top:503.98px;font-size:9.713px;color:#15171b;left:222.50px;transform-origin:0 50%;transform:scaleX(1.0811);letter-spacing:-0.074px;">Адаптация на новой должности</div>
<svg class="abs" style="left:467.5px;top:497.00px" width="22.6" height="22.6" viewBox="0 0 24 24"><use href="#a5"/></svg>
<div class="t m2" style="top:497.28px;font-size:9.713px;color:#15171b;left:494.80px;transform-origin:0 50%;transform:scaleX(1.0811);letter-spacing:-0.204px;">Елена Логинова</div>
<div class="t " style="top:512.15px;font-size:8.325px;color:#73777e;left:494.80px;transform-origin:0 50%;transform:scaleX(1.0811);letter-spacing:-0.074px;">Аналитик</div>
<div class="t m2" style="top:503.98px;font-size:9.713px;color:#15171b;left:603.00px;transform-origin:0 50%;transform:scaleX(1.0811);letter-spacing:-0.185px;">01.01.2024 - 31.12.2024</div>
<div class="t " style="top:502.20px;font-size:7.678px;color:#4a4f57;left:756.00px;transform-origin:0 50%;transform:scaleX(1.0811);letter-spacing:-0.416px;">95%</div>
<div class="t " style="top:502.20px;font-size:7.678px;color:#4a4f57;right:174.40px;transform-origin:100% 50%;transform:scaleX(1.0811);letter-spacing:0.111px;">10 из 11</div>
<div class="abs" style="left:756px;top:513.9px;width:93.8px;height:3px;background:#eaeef4;border-radius:1.5px"></div>
<div class="abs" style="left:756px;top:513.9px;width:85.8px;height:3px;background:#14b88a;border-radius:1.5px"></div>
<div class="abs" style="left:886.8px;top:506.6px;width:3.4px;height:3.4px;background:#6c47b4;border-radius:50%"></div>
<div class="t m1" style="top:503.98px;font-size:9.713px;color:#6c47b4;left:897.30px;transform-origin:0 50%;transform:scaleX(1.0811);letter-spacing:-0.019px;">Активен</div>
<svg class="abs" style="left:977px;top:499.30px" width="8" height="18" viewBox="0 0 8 18" fill="#4d525a"><circle cx="4" cy="2.9" r="1.35"/><circle cx="4" cy="9" r="1.35"/><circle cx="4" cy="15.1" r="1.35"/></svg>
<div class="abs" style="left:76px;top:582.5px;width:908.3px;height:1px;background:#eaebee;"></div>
<svg class="abs" style="left:87.2px;top:547.00px" width="22.6" height="22.6" viewBox="0 0 24 24"><use href="#a5"/></svg>
<div class="t m2" style="top:547.28px;font-size:9.713px;color:#15171b;left:114.30px;transform-origin:0 50%;transform:scaleX(1.0811);letter-spacing:-0.204px;">Елена Логинова</div>
<div class="t " style="top:562.15px;font-size:8.325px;color:#73777e;left:114.30px;transform-origin:0 50%;transform:scaleX(1.0811);letter-spacing:-0.074px;">Аналитик</div>
<div class="t m1" style="top:553.98px;font-size:9.713px;color:#15171b;left:222.50px;transform-origin:0 50%;transform:scaleX(1.0811);letter-spacing:-0.074px;">Повышение уровня лидерских компетенций</div>
<svg class="abs" style="left:467.5px;top:547.00px" width="22.6" height="22.6" viewBox="0 0 24 24"><use href="#a4"/></svg>
<div class="t m2" style="top:547.28px;font-size:9.713px;color:#15171b;left:494.80px;transform-origin:0 50%;transform:scaleX(1.0811);letter-spacing:-0.204px;">Алексей Петров</div>
<div class="t " style="top:562.15px;font-size:8.325px;color:#73777e;left:494.80px;transform-origin:0 50%;transform:scaleX(1.0811);letter-spacing:-0.074px;">Разработчик</div>
<div class="t m2" style="top:553.98px;font-size:9.713px;color:#15171b;left:603.00px;transform-origin:0 50%;transform:scaleX(1.0811);letter-spacing:-0.185px;">01.01.2024 - 31.12.2024</div>
<div class="t " style="top:552.20px;font-size:7.678px;color:#4a4f57;left:756.00px;transform-origin:0 50%;transform:scaleX(1.0811);letter-spacing:-0.416px;">95%</div>
<div class="t " style="top:552.20px;font-size:7.678px;color:#4a4f57;right:174.40px;transform-origin:100% 50%;transform:scaleX(1.0811);letter-spacing:0.111px;">10 из 11</div>
<div class="abs" style="left:756px;top:563.9000000000001px;width:93.8px;height:3px;background:#eaeef4;border-radius:1.5px"></div>
<div class="abs" style="left:756px;top:563.9000000000001px;width:85.8px;height:3px;background:#14b88a;border-radius:1.5px"></div>
<div class="abs" style="left:886.8px;top:556.6px;width:3.4px;height:3.4px;background:#12b07a;border-radius:50%"></div>
<div class="t m1" style="top:553.98px;font-size:9.713px;color:#12b07a;left:897.30px;transform-origin:0 50%;transform:scaleX(1.0811);letter-spacing:-0.019px;">Завершён</div>
<svg class="abs" style="left:977px;top:549.30px" width="8" height="18" viewBox="0 0 8 18" fill="#4d525a"><circle cx="4" cy="2.9" r="1.35"/><circle cx="4" cy="9" r="1.35"/><circle cx="4" cy="15.1" r="1.35"/></svg>
<div class="abs" style="left:76px;top:632.5px;width:908.3px;height:1px;background:#eaebee;"></div>
<svg class="abs" style="left:87.2px;top:597.00px" width="22.6" height="22.6" viewBox="0 0 24 24"><use href="#a6"/></svg>
<div class="t m2" style="top:597.28px;font-size:9.713px;color:#15171b;left:114.30px;transform-origin:0 50%;transform:scaleX(1.0811);letter-spacing:-0.204px;">Екатерина Рогова</div>
<div class="t " style="top:612.15px;font-size:8.325px;color:#73777e;left:114.30px;transform-origin:0 50%;transform:scaleX(1.0811);letter-spacing:-0.074px;">Тестировкщик</div>
<div class="t m1" style="top:603.98px;font-size:9.713px;color:#15171b;left:222.50px;transform-origin:0 50%;transform:scaleX(1.0811);letter-spacing:-0.106px;">Повышение уровня hard компетенций</div>
<svg class="abs" style="left:467.5px;top:597.00px" width="22.6" height="22.6" viewBox="0 0 24 24"><use href="#a4"/></svg>
<div class="t m2" style="top:597.28px;font-size:9.713px;color:#15171b;left:494.80px;transform-origin:0 50%;transform:scaleX(1.0811);letter-spacing:-0.204px;">Алексей Петров</div>
<div class="t " style="top:612.15px;font-size:8.325px;color:#73777e;left:494.80px;transform-origin:0 50%;transform:scaleX(1.0811);letter-spacing:-0.074px;">Разработчик</div>
<div class="t m2" style="top:603.98px;font-size:9.713px;color:#15171b;left:603.00px;transform-origin:0 50%;transform:scaleX(1.0811);letter-spacing:-0.185px;">01.01.2024 - 31.12.2024</div>
<div class="t " style="top:602.20px;font-size:7.678px;color:#4a4f57;left:756.00px;transform-origin:0 50%;transform:scaleX(1.0811);letter-spacing:-0.416px;">95%</div>
<div class="t " style="top:602.20px;font-size:7.678px;color:#4a4f57;right:174.40px;transform-origin:100% 50%;transform:scaleX(1.0811);letter-spacing:0.111px;">10 из 11</div>
<div class="abs" style="left:756px;top:613.9000000000001px;width:93.8px;height:3px;background:#eaeef4;border-radius:1.5px"></div>
<div class="abs" style="left:756px;top:613.9000000000001px;width:85.8px;height:3px;background:#14b88a;border-radius:1.5px"></div>
<div class="abs" style="left:886.8px;top:606.6px;width:3.4px;height:3.4px;background:#6c47b4;border-radius:50%"></div>
<div class="t m1" style="top:603.98px;font-size:9.713px;color:#6c47b4;left:897.30px;transform-origin:0 50%;transform:scaleX(1.0811);letter-spacing:-0.019px;">Активен</div>
<svg class="abs" style="left:977px;top:599.30px" width="8" height="18" viewBox="0 0 8 18" fill="#4d525a"><circle cx="4" cy="2.9" r="1.35"/><circle cx="4" cy="9" r="1.35"/><circle cx="4" cy="15.1" r="1.35"/></svg>
<div class="abs" style="left:76px;top:253px;width:182.4px;height:87.6px;background:#fff;border-radius:1px 1px 3px 3px;box-shadow:0 3px 12px rgba(40,40,50,.12),0 0 3px rgba(40,40,50,.06)"></div>
<div class="abs" style="left:76px;top:253px;width:182.4px;height:27.8px;background:#f2f2f4;"></div>
<div class="t " style="top:262.00px;font-size:11.100px;color:#2b2f36;left:87.30px;transform-origin:0 50%;transform:scaleX(1.0811);letter-spacing:-0.130px;">Прямые подчинённые</div>
<div class="t " style="top:290.50px;font-size:11.100px;color:#2b2f36;left:87.30px;transform-origin:0 50%;transform:scaleX(1.0811);letter-spacing:-0.130px;">Все подчинённые</div>
<div class="t " style="top:319.20px;font-size:11.100px;color:#2b2f36;left:87.30px;transform-origin:0 50%;transform:scaleX(1.0811);letter-spacing:-0.120px;">Все, кого я курирую</div>
</div>
</body></html>
